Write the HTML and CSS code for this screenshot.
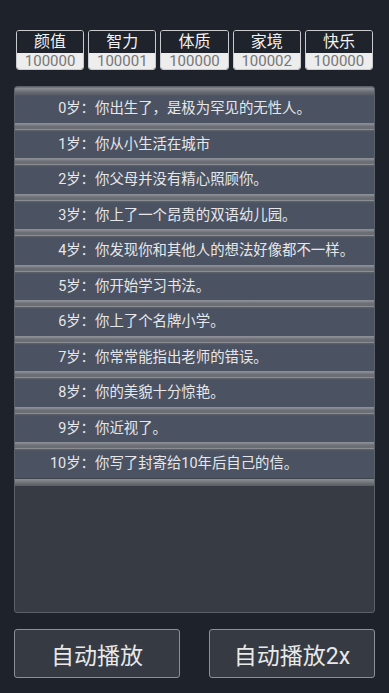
FILE: index.html
```html
<!DOCTYPE html>
<html lang="zh">
<head>
<meta charset="utf-8">
<link rel="stylesheet" href="styles.css">
</head>
<body>
<div class="page">
  <div class="stats">
    <div class="stat"><div class="label">颜值</div><div class="value">100000</div></div>
    <div class="stat"><div class="label">智力</div><div class="value">100001</div></div>
    <div class="stat"><div class="label">体质</div><div class="value">100000</div></div>
    <div class="stat"><div class="label">家境</div><div class="value">100002</div></div>
    <div class="stat"><div class="label">快乐</div><div class="value">100000</div></div>
  </div>
  <div class="panel">
    <ul class="list">
      <li class="item"><span class="age">0岁：</span>你出生了，是极为罕见的无性人。</li>
      <li class="item"><span class="age">1岁：</span>你从小生活在城市</li>
      <li class="item"><span class="age">2岁：</span>你父母并没有精心照顾你。</li>
      <li class="item"><span class="age">3岁：</span>你上了一个昂贵的双语幼儿园。</li>
      <li class="item"><span class="age">4岁：</span>你发现你和其他人的想法好像都不一样。</li>
      <li class="item"><span class="age">5岁：</span>你开始学习书法。</li>
      <li class="item"><span class="age">6岁：</span>你上了个名牌小学。</li>
      <li class="item"><span class="age">7岁：</span>你常常能指出老师的错误。</li>
      <li class="item"><span class="age">8岁：</span>你的美貌十分惊艳。</li>
      <li class="item"><span class="age">9岁：</span>你近视了。</li>
      <li class="item"><span class="age">10岁：</span>你写了封寄给10年后自己的信。</li>
    </ul>
  </div>
  <div class="buttons">
    <button class="btn">自动播放</button>
    <button class="btn">自动播放2x</button>
  </div>
</div>
</body>
</html>
```
FILE: styles.css
```css
* { box-sizing: border-box; }
html, body {
  margin: 0;
  padding: 0;
  background: #1e222a;
  font-family: Roboto, "Noto Sans CJK SC", sans-serif;
}
.page {
  width: 389px;
  height: 693px;
  padding-top: 30px;
  display: flex;
  flex-direction: column;
}
.stats {
  display: grid;
  grid-template-columns: repeat(5, 1fr);
  gap: 4px;
  padding: 0 16px;
}
.stat {
  border: 1px solid #c9cbcf;
  border-radius: 3px;
  overflow: hidden;
  height: 40px;
  display: flex;
  flex-direction: column;
}
.label {
  height: 22px;
  line-height: 22px;
  text-align: center;
  color: #f2f2f2;
  font-size: 16px;
  background: #1f232b;
}
.value {
  flex: 1;
  background: #ededed;
  color: #767676;
  text-align: center;
  font-size: 15px;
  line-height: 16px;
}
.panel {
  margin: 16px 14px 0;
  height: 527px;
  border: 1px solid #5c6069;
  border-radius: 3px;
  background: #373b44;
  overflow: hidden;
}
.list {
  list-style: none;
  margin: 0;
  padding: 0;
}
.list::after {
  content: "";
  display: block;
  height: 8px;
  background: linear-gradient(#3f434b 0, #3f434b 1px, #8c8f94 1px, #7d8085 3px, #6c6f74 5px, #5a5d63 8px);
}
.item {
  height: 35.5px;
  padding-top: 9px;
  background:
    linear-gradient(#8e9196 0, #80838a 2px, #6c6f75 3px, #6a6d73 6px, #8a8d92 6px, #8a8d92 7px, #5d6168 7px, #4c5363 9px) top / 100% 9px no-repeat,
    #4b5262;
  color: #e6e7ea;
  font-size: 14.4px;
  line-height: 26.5px;
  white-space: nowrap;
}
.item:first-child {
  background:
    linear-gradient(#5b5f66 0, #8c8f94 1px, #7c7f85 3px, #6a6d73 5px, #5d6168 7px, #4c5363 9px) top / 100% 9px no-repeat,
    #4b5262;
}
.age {
  display: inline-block;
  width: 80px;
  text-align: right;
}
.buttons {
  display: flex;
  justify-content: space-between;
  margin: 16px 14px 0;
}
.btn {
  width: 166px;
  height: 49px;
  border: 1px solid #8b8f96;
  border-radius: 3px;
  background: #363a43;
  color: #e8e8e8;
  font-family: Roboto, "Noto Sans CJK SC", sans-serif;
  font-size: 23px;
  padding: 0;
}
```
